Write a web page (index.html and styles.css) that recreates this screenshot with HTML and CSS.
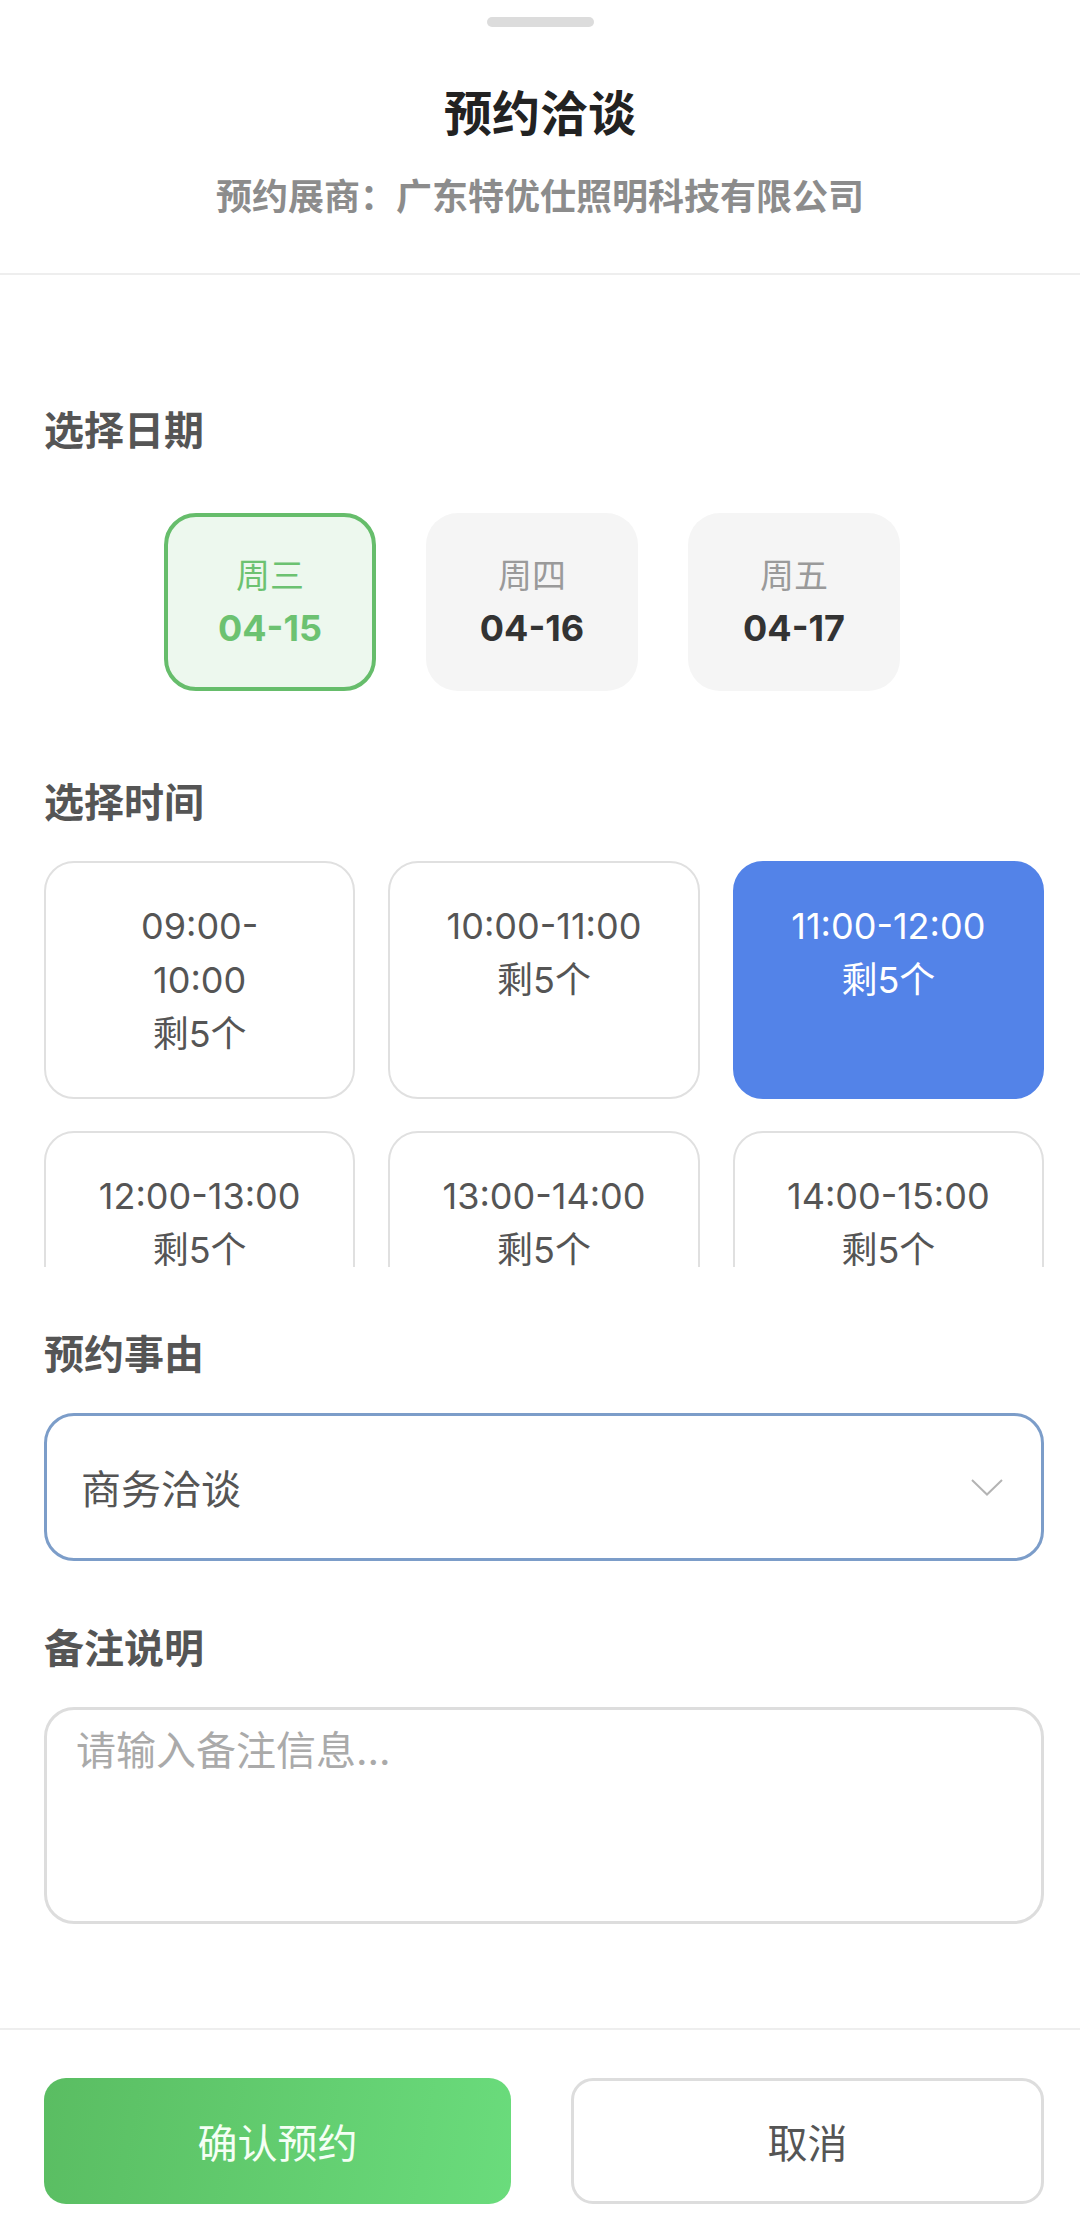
FILE: index.html
```html
<!DOCTYPE html>
<html lang="zh-CN">
<head>
    <meta charset="UTF-8">
    <meta name="viewport" content="width=device-width, initial-scale=1.0">
    <title>预约洽谈</title>
    <link rel="stylesheet" href="styles.css">
</head>
<body>
    <div class="sheet">
        <div class="handle"></div>
        <div class="header">
            <h2>预约洽谈</h2>
            <p class="sub">预约展商：广东特优仕照明科技有限公司</p>
        </div>

        <div class="content">
            <div class="section">
                <div class="label">选择日期</div>
                <div class="date-row">
                    <div class="date-item active">
                        <span class="week">周三</span>
                        <span class="day">04-15</span>
                    </div>
                    <div class="date-item">
                        <span class="week">周四</span>
                        <span class="day">04-16</span>
                    </div>
                    <div class="date-item">
                        <span class="week">周五</span>
                        <span class="day">04-17</span>
                    </div>
                </div>
            </div>

            <div class="section">
                <div class="label">选择时间</div>
                <div class="time-grid">
                    <div class="slot">
                        <span class="range">09:00-<wbr>10:00</span>
                        <span class="left">剩5个</span>
                    </div>
                    <div class="slot">
                        <span class="range">10:00-<wbr>11:00</span>
                        <span class="left">剩5个</span>
                    </div>
                    <div class="slot active">
                        <span class="range">11:00-<wbr>12:00</span>
                        <span class="left">剩5个</span>
                    </div>
                    <div class="slot">
                        <span class="range">12:00-<wbr>13:00</span>
                        <span class="left">剩5个</span>
                    </div>
                    <div class="slot">
                        <span class="range">13:00-<wbr>14:00</span>
                        <span class="left">剩5个</span>
                    </div>
                    <div class="slot">
                        <span class="range">14:00-<wbr>15:00</span>
                        <span class="left">剩5个</span>
                    </div>
                    <div class="slot">
                        <span class="range">15:00-<wbr>16:00</span>
                        <span class="left">剩5个</span>
                    </div>
                    <div class="slot">
                        <span class="range">16:00-<wbr>17:00</span>
                        <span class="left">剩5个</span>
                    </div>
                </div>
            </div>

            <div class="section">
                <div class="label">预约事由</div>
                <div class="select">
                    <span>商务洽谈</span>
                    <svg width="32" height="17" viewBox="0 0 32 17">
                        <polyline points="1,1 16,15.5 31,1" fill="none" stroke="#b4b4b4" stroke-width="2"/>
                    </svg>
                </div>
            </div>

            <div class="section">
                <div class="label">备注说明</div>
                <textarea placeholder="请输入备注信息..."></textarea>
            </div>
        </div>

        <div class="footer">
            <button class="btn confirm">确认预约</button>
            <button class="btn cancel">取消</button>
        </div>
    </div>
</body>
</html>
```

FILE: styles.css
```css
body {
    margin: 0;
    font-family: Inter, "Noto Sans CJK SC", sans-serif;
    background: #fff;
    color: #333;
}
.handle {
    width: 107px;
    height: 10px;
    border-radius: 5px;
    background: #dcdcdc;
    margin: 17px auto 0;
}
.header {
    text-align: center;
    padding: 57px 0 52px;
    border-bottom: 2px solid #eee;
}
.header h2 {
    margin: 0;
    font-size: 48px;
    line-height: 60px;
    font-weight: 700;
    color: #222;
}
.header .sub {
    margin: 29px 0 0;
    font-size: 36px;
    line-height: 48px;
    font-weight: 700;
    color: #8c8c8c;
}
.content {
    padding: 128px 36px 104px 44px;
}
.section {
    margin-bottom: 60px;
}
.section:last-child {
    margin-bottom: 0;
}
.label {
    font-size: 40px;
    line-height: 56px;
    font-weight: 700;
    color: #555;
    margin-bottom: 30px;
}
.date-row {
    display: flex;
    gap: 50px;
    padding: 24px 0 24px 120px;
}
.date-item {
    width: 212px;
    height: 178px;
    box-sizing: border-box;
    border: 4px solid transparent;
    border-radius: 32px;
    background: #f5f5f5;
    display: flex;
    flex-direction: column;
    align-items: center;
    justify-content: center;
}
.date-item .week {
    font-size: 34px;
    line-height: 53px;
    color: #9a9a9a;
}
.date-item .day {
    font-size: 36px;
    line-height: 53px;
    font-weight: 700;
    color: #333;
}
.date-item.active {
    background: #edf8ee;
    border-color: #66bd6b;
}
.date-item.active .week,
.date-item.active .day {
    color: #6cc271;
}
.time-grid {
    display: grid;
    grid-template-columns: repeat(3, 1fr);
    gap: 32px 33px;
    align-content: start;
    height: 406px;
    overflow-y: auto;
    scrollbar-width: none;
}
.slot {
    border: 2px solid #e0e0e0;
    border-radius: 30px;
    padding: 36px 52px;
    text-align: center;
    font-size: 36px;
    line-height: 54px;
    color: #555;
}
.slot span {
    display: block;
}
.slot.active {
    background: #5383e8;
    border-color: #5383e8;
    color: #fff;
}
.select {
    height: 148px;
    box-sizing: border-box;
    border: 3px solid #7c9dc9;
    border-radius: 30px;
    display: flex;
    align-items: center;
    justify-content: space-between;
    padding: 0 38px 0 34px;
    font-size: 40px;
    color: #555;
}
textarea {
    display: block;
    width: 100%;
    height: 217px;
    box-sizing: border-box;
    border: 3px solid #ddd;
    border-radius: 30px;
    padding: 13px 29px;
    font-family: inherit;
    font-size: 40px;
    line-height: 56px;
    color: #555;
    resize: none;
    outline: none;
}
textarea::placeholder {
    color: #aaa;
}
.footer {
    display: flex;
    gap: 60px;
    border-top: 2px solid #eee;
    padding: 48px 36px 32px 44px;
}
.btn {
    flex: 1;
    height: 126px;
    border-radius: 22px;
    font-family: inherit;
    font-size: 40px;
    cursor: pointer;
}
.confirm {
    border: none;
    background: linear-gradient(100deg, #5abd62, #6adc7c);
    color: #f4fff4;
}
.cancel {
    background: #fff;
    border: 3px solid #ddd;
    color: #555;
}
```
